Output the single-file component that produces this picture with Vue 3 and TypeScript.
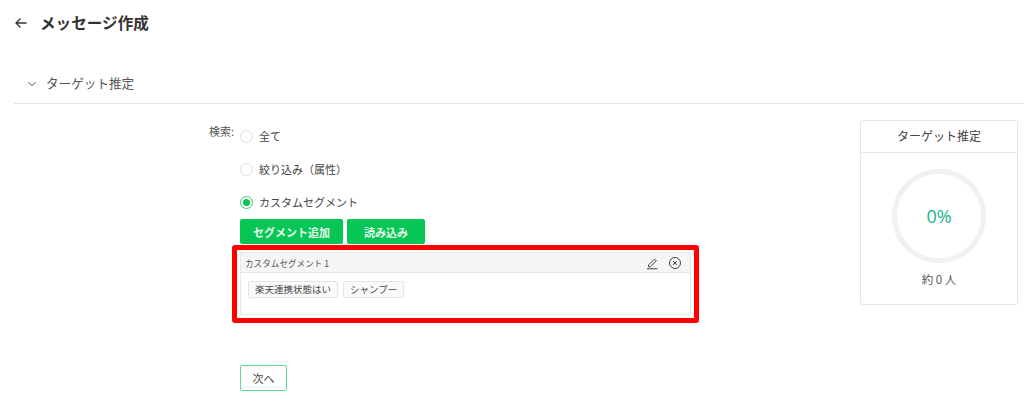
<template>
  <div class="page">
    <header class="page-header">
      <svg class="back-icon" width="14" height="14" viewBox="0 0 14 14" fill="none" stroke="#333" stroke-width="1.3">
        <path d="M12.5 7H2M6.500 2.500L2 7l4.500 4.500" />
      </svg>
      <h1 class="page-title">メッセージ作成</h1>
    </header>

    <div class="section-header">
      <svg class="chevron" width="10" height="10" viewBox="0 0 10 10" fill="none" stroke="#555" stroke-width="1">
        <path d="M1.500 3.200L5 6.800l3.500-3.600" />
      </svg>
      <span>ターゲット推定</span>
    </div>

    <div class="content">
      <div class="form">
        <div class="search-row">
          <span class="search-label">検索:</span>
          <div class="radio-list">
            <label v-for="opt in options" :key="opt.label" class="radio-row">
              <span class="radio" :class="{ checked: opt.checked }"></span>
              <span>{{ opt.label }}</span>
            </label>
          </div>
        </div>

        <div class="form-body">
          <div class="actions">
            <button class="btn-primary add">セグメント追加</button>
            <button class="btn-primary load">読み込み</button>
          </div>

          <div class="highlight">
            <div class="segment">
              <div class="segment-head">
                <span>カスタムセグメント 1</span>
                <div class="segment-icons">
                  <svg width="14" height="14" viewBox="0 0 14 14" fill="none" stroke="#444" stroke-width="1">
                    <path d="M3.500 9L9.500 3l1.800 1.800L5.300 10.800H3.500z" />
                    <path d="M2 12.800h10.500" />
                  </svg>
                  <svg width="14" height="14" viewBox="0 0 14 14" fill="none" stroke="#444" stroke-width="1">
                    <circle cx="7" cy="7" r="5.500" />
                    <path d="M5 5l4 4M9 5l-4 4" />
                  </svg>
                </div>
              </div>
              <div class="tags">
                <span v-for="tag in tags" :key="tag" class="tag">{{ tag }}</span>
              </div>
            </div>
          </div>

          <button class="btn-next">次へ</button>
        </div>
      </div>

      <aside class="estimate">
        <div class="estimate-title">ターゲット推定</div>
        <div class="estimate-body">
          <div class="ring">0%</div>
          <div class="count">約 0 人</div>
        </div>
      </aside>
    </div>
  </div>
</template>

<script setup lang="ts">
interface RadioOption {
  label: string
  checked: boolean
}

const options: RadioOption[] = [
  { label: '全て', checked: false },
  { label: '絞り込み（属性）', checked: false },
  { label: 'カスタムセグメント', checked: true }
]

const tags = ['楽天連携状態はい', 'シャンプー']
</script>

<style>
html,
body {
  margin: 0;
  background: #fff;
}
</style>

<style scoped>
.page {
  width: 1024px;
  height: 405px;
  overflow: hidden;
  font-family: "Noto Sans CJK JP", "Noto Sans", sans-serif;
  color: #444;
  font-size: 12px;
}

.page-header {
  height: 46px;
  display: flex;
  align-items: center;
  padding-left: 14px;
  gap: 12px;
}

.page-title {
  margin: 0;
  padding-bottom: 2px;
  font-size: 15.6px;
  font-weight: 700;
  color: #333;
  line-height: 24px;
}

.section-header {
  margin: 19px 0 0 14px;
  height: 38px;
  border-bottom: 1px solid #e4e4e4;
  display: flex;
  align-items: center;
  gap: 9px;
  padding-left: 13px;
  font-size: 12.6px;
  color: #555;
}

.section-header span {
  padding-bottom: 3px;
}

.content {
  display: flex;
  justify-content: space-between;
  padding: 16px 6px 0 209px;
}

.search-row {
  display: flex;
  align-items: flex-start;
  gap: 6px;
}

.search-label {
  width: 25px;
  white-space: nowrap;
  line-height: 22px;
  font-size: 11px;
  color: #555;
}

.radio-list {
  display: flex;
  flex-direction: column;
  gap: 11px;
  padding-top: 5px;
}

.radio-row {
  display: flex;
  align-items: center;
  gap: 6px;
  height: 22px;
  font-size: 11px;
  color: #444;
}

.radio {
  width: 13px;
  height: 13px;
  box-sizing: border-box;
  border: 1px solid #ddd;
  border-radius: 50%;
  background: #fff;
  display: flex;
  align-items: center;
  justify-content: center;
}

.radio.checked {
  border-color: #3cc879;
}

.radio.checked::after {
  content: "";
  width: 7px;
  height: 7px;
  border-radius: 50%;
  background: #06c755;
}

.form-body {
  margin-left: 31px;
  margin-top: 6px;
}

.actions {
  display: flex;
  gap: 4px;
}

.btn-primary {
  height: 25px;
  padding: 0;
  border: 0;
  border-radius: 2px;
  background: #06c755;
  color: #e9f9ef;
  font: 700 11px "Noto Sans CJK JP", sans-serif;
}

.add {
  width: 103px;
}

.load {
  width: 78px;
}

.highlight {
  margin: 1px 0 0 -8px;
  width: 467px;
  height: 78px;
  box-sizing: border-box;
  padding: 2px 3px;
  border: 5px solid #f00;
  border-radius: 3px;
}

.segment {
  height: 63px;
  box-sizing: border-box;
  border: 1px solid #e8e8e8;
}

.segment-head {
  height: 20px;
  box-sizing: border-box;
  border-bottom: 1px solid #e6e6e6;
  background: #f5f5f5;
  display: flex;
  align-items: center;
  justify-content: space-between;
  padding: 0 8px 0 4px;
  font-size: 8.6px;
  color: #555;
}

.segment-icons {
  display: flex;
  gap: 9px;
}

.tags {
  display: flex;
  gap: 5px;
  padding: 8px 7px;
}

.tag {
  height: 17px;
  box-sizing: border-box;
  padding: 0 6px;
  border: 1px solid #e4e4e4;
  border-radius: 2px;
  background: #fafafa;
  font-size: 9.5px;
  line-height: 15px;
  color: #444;
}

.btn-next {
  display: block;
  margin-top: 42px;
  width: 47px;
  height: 26px;
  padding: 0;
  border: 1px solid #5fd890;
  border-radius: 2px;
  background: #fff;
  color: #444;
  font: 11px "Noto Sans CJK JP", sans-serif;
}

.estimate {
  width: 158px;
  height: 185px;
  box-sizing: border-box;
  border: 1px solid #e6e6e6;
  border-radius: 3px;
}

.estimate-title {
  height: 32px;
  box-sizing: border-box;
  border-bottom: 1px solid #e6e6e6;
  text-align: center;
  line-height: 29px;
  font-size: 12px;
  color: #444;
}

.estimate-body {
  display: flex;
  flex-direction: column;
  align-items: center;
  padding-top: 16px;
}

.ring {
  width: 94px;
  height: 94px;
  box-sizing: border-box;
  border: 5px solid #f1f1f1;
  border-radius: 50%;
  display: flex;
  align-items: center;
  justify-content: center;
  font-family: "Open Sans", sans-serif;
  font-size: 18px;
  color: #20b38d;
}

.count {
  margin-top: 8px;
  font-size: 11.5px;
  color: #555;
}
</style>
